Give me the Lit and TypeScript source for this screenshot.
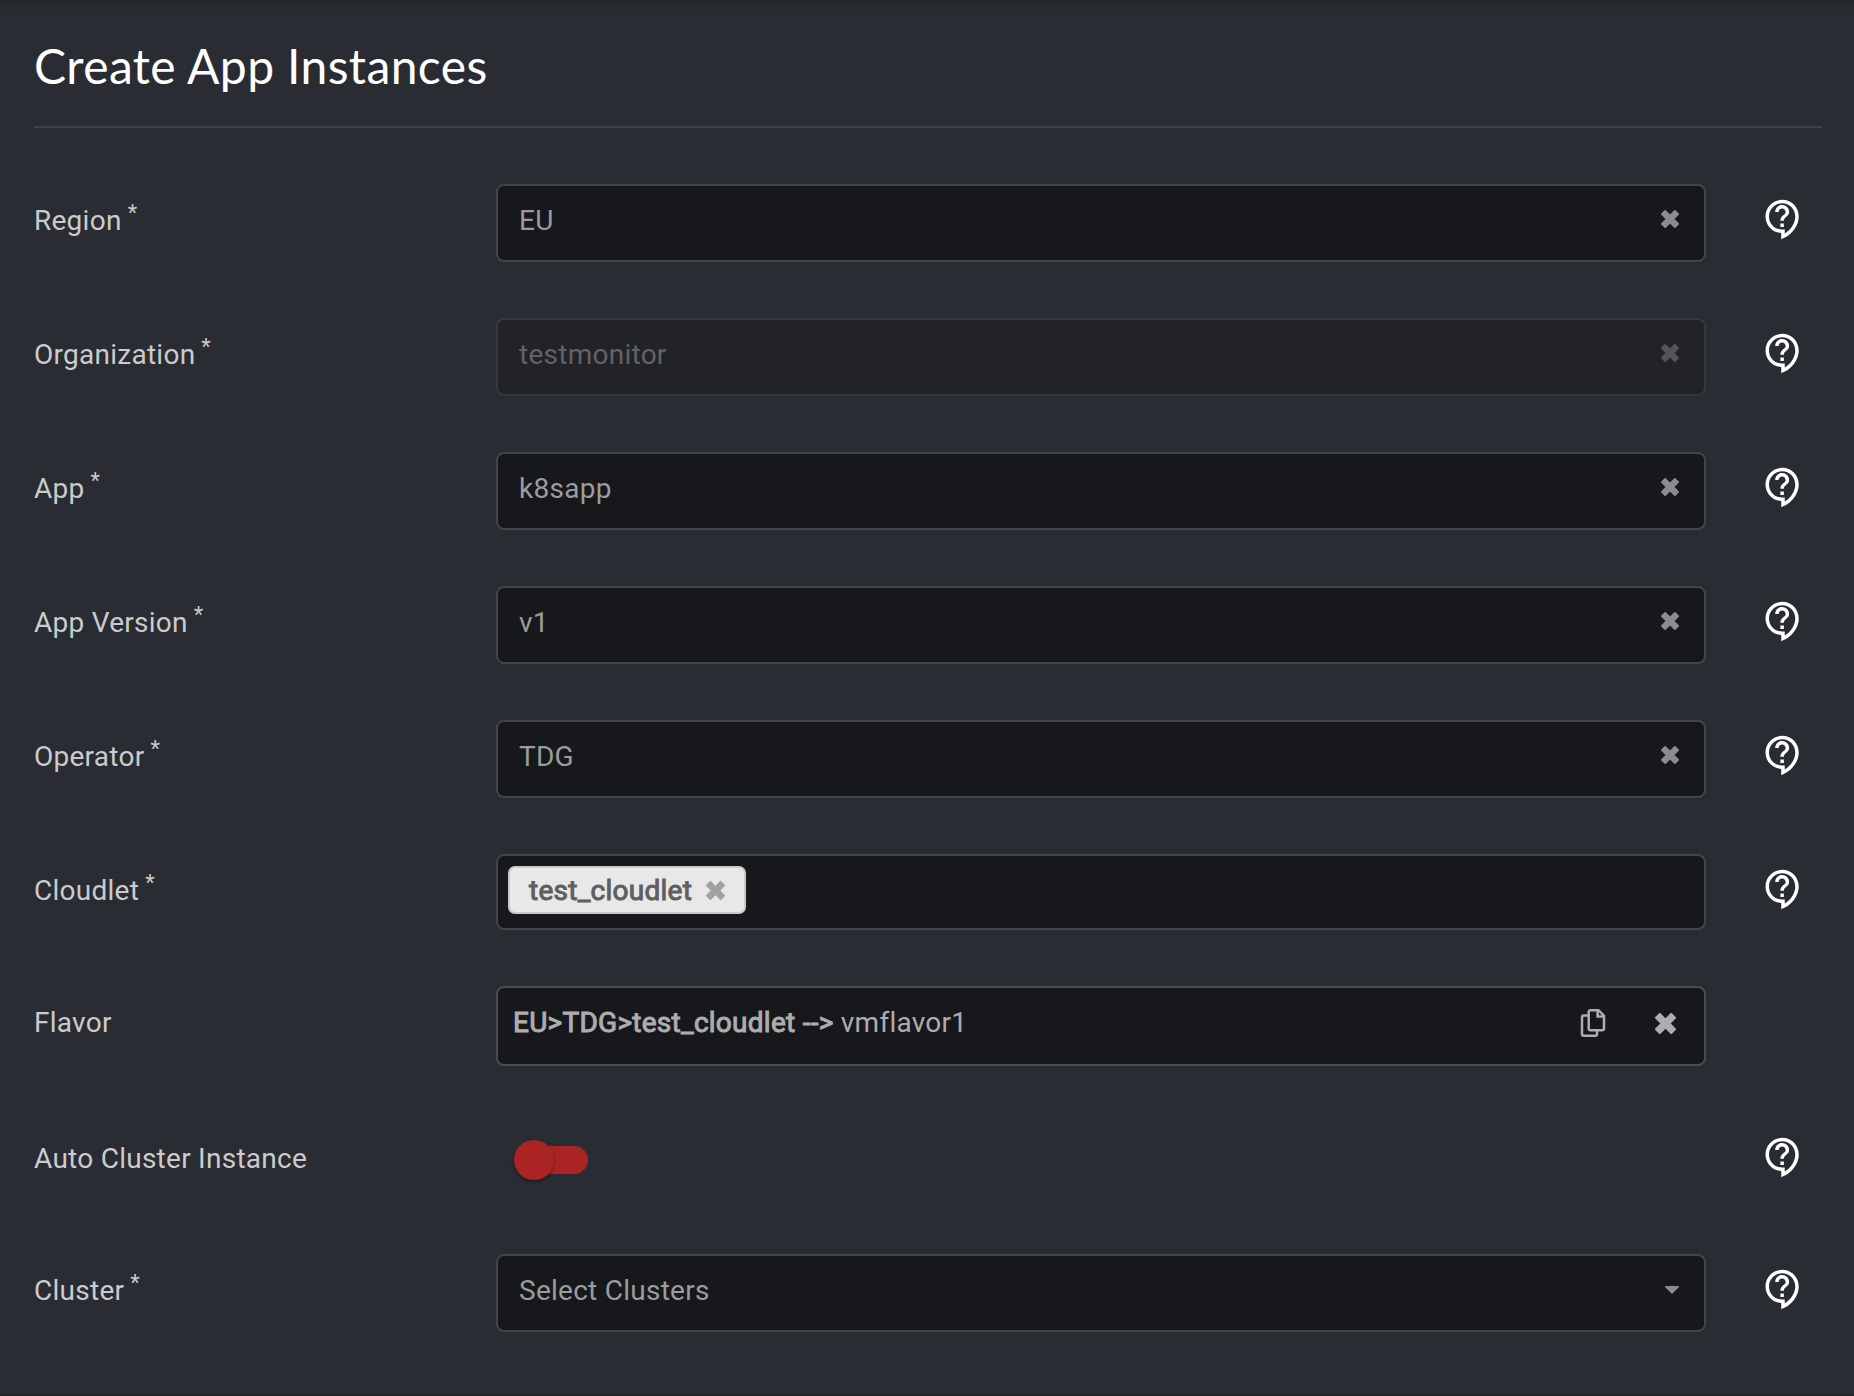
import { LitElement, html, svg, css, nothing } from "lit";
import { customElement, property } from "lit/decorators.js";

type Kind = "select" | "chips" | "mapping" | "toggle" | "placeholder";

interface Field {
  label: string;
  kind: Kind;
  value?: string;
  prefix?: string;
  required?: boolean;
  disabled?: boolean;
  help?: boolean;
}

const FIELDS: Field[] = [
  { label: "Region", kind: "select", value: "EU", required: true, help: true },
  { label: "Organization", kind: "select", value: "testmonitor", required: true, disabled: true, help: true },
  { label: "App", kind: "select", value: "k8sapp", required: true, help: true },
  { label: "App Version", kind: "select", value: "v1", required: true, help: true },
  { label: "Operator", kind: "select", value: "TDG", required: true, help: true },
  { label: "Cloudlet", kind: "chips", value: "test_cloudlet", required: true, help: true },
  { label: "Flavor", kind: "mapping", prefix: "EU>TDG>test_cloudlet -->", value: "vmflavor1" },
  { label: "Auto Cluster Instance", kind: "toggle", help: true },
  { label: "Cluster", kind: "placeholder", value: "Select Clusters", required: true, help: true },
];

const cross = svg`<path d="M4.6 1 10 6.4 15.4 1 19 4.6 13.6 10 19 15.4 15.4 19 10 13.6 4.6 19 1 15.4 6.4 10 1 4.6Z" fill="currentColor" stroke="currentColor" stroke-width="2" stroke-linejoin="round"/>`;

@customElement("form-row")
export class FormRow extends LitElement {
  @property({ attribute: false }) field!: Field;

  static styles = css`
    :host {
      display: grid;
      grid-template-columns: 462px 1210px 1fr;
      align-items: start;
      font: 28px/32px Roboto, "Liberation Sans", sans-serif;
      letter-spacing: 0.26px;
      color: #cbcbcc;
    }
    .label {
      display: flex;
      align-items: flex-start;
      padding-top: 21px;
      white-space: pre;
    }
    .star {
      font-size: 22px;
      line-height: 24px;
      letter-spacing: 0;
      margin-left: 6px;
      margin-top: -4px;
    }
    .box {
      box-sizing: border-box;
      display: flex;
      align-items: flex-start;
      height: 78px;
      border: 2px solid #444547;
      border-radius: 8px;
      background: #17181c;
      color: #9b9c9d;
    }
    .select,
    .placeholder {
      padding: 19px 25px 0 21px;
    }
    .disabled {
      background: #222327;
      border-color: #37383c;
      color: #616265;
    }
    .text {
      flex: 1;
      white-space: pre;
    }
    .clear {
      display: block;
      flex: none;
      width: 18px;
      height: 18px;
      margin-top: 5px;
      color: #8b8c8d;
    }
    .disabled .clear {
      color: #545558;
    }
    .arrow {
      display: block;
      width: 14px;
      height: 8px;
      margin: 11px 0 0 0;
      color: #8b8c8d;
    }
    .chips {
      height: 76px;
      padding: 10px;
    }
    .chip {
      box-sizing: border-box;
      display: flex;
      align-items: center;
      width: 238px;
      height: 48px;
      padding: 1px 0 0 19px;
      border: 2px solid #c9c9c9;
      border-radius: 7px;
      background: #e8e8e8;
      color: #5f5f5f;
      -webkit-text-stroke: 1px currentColor;
    }
    .chip .clear {
      width: 19px;
      height: 19px;
      margin: 0 0 0 14px;
      color: #a1a1a1;
    }
    .mapping {
      height: 80px;
      padding: 19px 28px 0 15px;
      border-color: #4b4c4f;
      color: #adadad;
    }
    .prefix {
      -webkit-text-stroke: 1px currentColor;
    }
    .mapping .copy {
      display: block;
      width: 26px;
      height: 30px;
      margin: 1px 49px 0 0;
    }
    .mapping .clear {
      width: 21px;
      height: 21px;
      margin-top: 6px;
      color: #adadad;
    }
    .toggle {
      display: flex;
      align-items: center;
      height: 76px;
      padding-left: 18px;
    }
    .track {
      display: flex;
      align-items: center;
      width: 68px;
      height: 28px;
      margin-left: 6px;
      border-radius: 14px;
      background: #ab2424;
    }
    .thumb {
      flex: none;
      width: 40px;
      height: 40px;
      margin-left: -6px;
      border-radius: 50%;
      background: #ab2424;
      box-shadow: 0 2px 3px rgba(0, 0, 0, 0.25), 0 1px 3px rgba(0, 0, 0, 0.15);
    }
    .help {
      display: block;
      width: 42px;
      height: 42px;
      margin: 13.5px 0 0 56px;
      color: #fff;
    }
  `;

  private clearIcon() {
    return html`<svg class="clear" viewBox="0 0 20 20">${cross}</svg>`;
  }

  private control(f: Field) {
    switch (f.kind) {
      case "select":
        return html`<div class="box select ${f.disabled ? "disabled" : ""}"><span class="text">${f.value}</span>${this.clearIcon()}</div>`;
      case "placeholder":
        return html`<div class="box placeholder"><span class="text">${f.value}</span><svg class="arrow" viewBox="0 0 14 8"><path d="M0 0H14V1L7 8 0 1Z" fill="currentColor"/></svg></div>`;
      case "chips":
        return html`<div class="box chips"><span class="chip">${f.value}${this.clearIcon()}</span></div>`;
      case "mapping":
        return html`<div class="box mapping"><span class="text"><span class="prefix">${f.prefix}</span> ${f.value}</span><svg class="copy" viewBox="0 0 26 30" fill="none" stroke="currentColor" stroke-width="2.5"><path d="M10.5 2.2H18.5L24 7.7V20.5A1.8 1.8 0 0 1 22.2 22.3H10.5A1.8 1.8 0 0 1 8.7 20.5V4A1.8 1.8 0 0 1 10.5 2.2Z"/><path d="M17.6 2.5V8.5H24"/><path d="M8.7 7.5H3.8A1.8 1.8 0 0 0 2 9.3V26A1.8 1.8 0 0 0 3.8 27.8H15.2A1.8 1.8 0 0 0 17 26V22.5"/></svg>${this.clearIcon()}</div>`;
      case "toggle":
        return html`<div class="toggle"><span class="track"><span class="thumb"></span></span></div>`;
    }
  }

  render() {
    const f = this.field;
    return html`
      <div class="label">${f.label}${f.required ? html`<span class="star">*</span>` : nothing}</div>
      ${this.control(f)}
      ${f.help
        ? html`<svg class="help" viewBox="0 0 24 24" fill="currentColor"><path d="M11 23.59v-3.6c-5.01-.26-9-4.42-9-9.49C2 5.26 6.26 1 11.5 1S21 5.26 21 10.5c0 4.95-3.44 9.93-8.57 12.4l-1.43.69zM11.5 3C7.36 3 4 6.36 4 10.5S7.36 18 11.5 18H13v2.3c3.64-2.3 6-6.08 6-9.8C19 6.36 15.64 3 11.5 3zm-1 11.5h2v2h-2zm2-1.5h-2c0-3.25 3-3 3-5 0-1.1-.9-2-2-2s-2 .9-2 2h-2c0-2.21 1.79-4 4-4s4 1.79 4 4c0 2.5-3 2.75-3 5z"/></svg>`
        : nothing}
    `;
  }
}

@customElement("app-root")
export class AppRoot extends LitElement {
  static styles = css`
    :host {
      display: block;
      box-sizing: border-box;
      height: 1396px;
      overflow: hidden;
      padding: 0 32px 0 34px;
      background: linear-gradient(#222327 0, #27292e 5px, #292c33 14px, #292c33 1394px, #232428 1395px);
    }
    .title {
      box-sizing: border-box;
      height: 128px;
      margin: 0 0 56px;
      padding-top: 37px;
      border-bottom: 2px solid #404144;
      font: 400 48px/58px Lato, "Liberation Sans", sans-serif;
      letter-spacing: 0.38px;
      color: #fff;
    }
    .form {
      display: flex;
      flex-direction: column;
      gap: 56px;
    }
  `;

  render() {
    return html`
      <h1 class="title">Create App Instances</h1>
      <div class="form">${FIELDS.map((f) => html`<form-row .field=${f}></form-row>`)}</div>
    `;
  }
}
